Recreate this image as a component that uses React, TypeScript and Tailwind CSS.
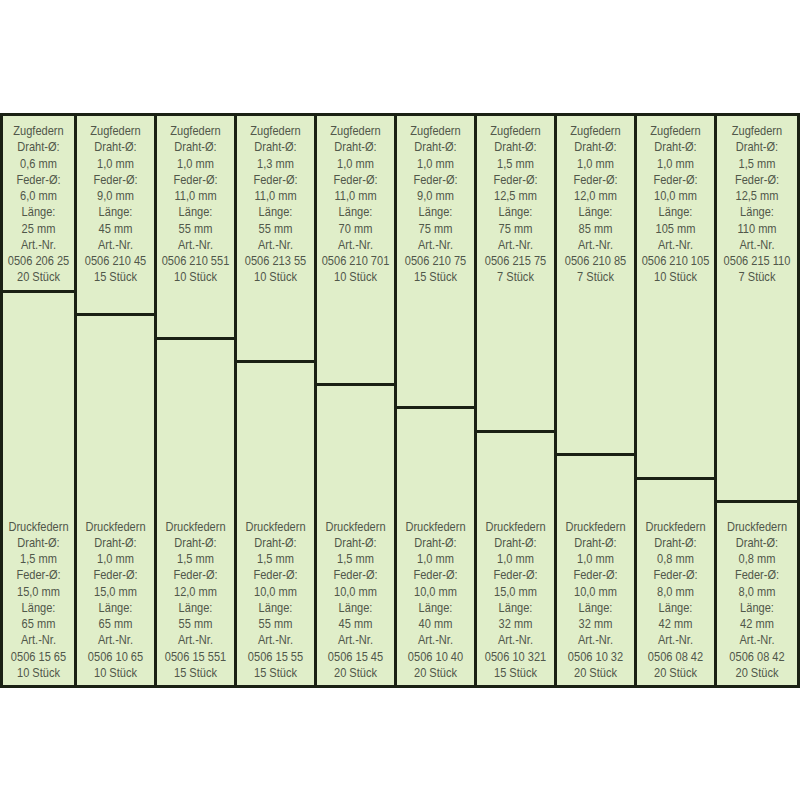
type Spring = { draht: string; feder: string; laenge: string; nr: string; stueck: string };

const zug: Spring[] = [
  { draht: '0,6', feder: '6,0', laenge: '25', nr: '0506 206 25', stueck: '20' },
  { draht: '1,0', feder: '9,0', laenge: '45', nr: '0506 210 45', stueck: '15' },
  { draht: '1,0', feder: '11,0', laenge: '55', nr: '0506 210 551', stueck: '10' },
  { draht: '1,3', feder: '11,0', laenge: '55', nr: '0506 213 55', stueck: '10' },
  { draht: '1,0', feder: '11,0', laenge: '70', nr: '0506 210 701', stueck: '10' },
  { draht: '1,0', feder: '9,0', laenge: '75', nr: '0506 210 75', stueck: '15' },
  { draht: '1,5', feder: '12,5', laenge: '75', nr: '0506 215 75', stueck: '7' },
  { draht: '1,0', feder: '12,0', laenge: '85', nr: '0506 210 85', stueck: '7' },
  { draht: '1,0', feder: '10,0', laenge: '105', nr: '0506 210 105', stueck: '10' },
  { draht: '1,5', feder: '12,5', laenge: '110', nr: '0506 215 110', stueck: '7' },
];

const druck: Spring[] = [
  { draht: '1,5', feder: '15,0', laenge: '65', nr: '0506 15 65', stueck: '10' },
  { draht: '1,0', feder: '15,0', laenge: '65', nr: '0506 10 65', stueck: '10' },
  { draht: '1,5', feder: '12,0', laenge: '55', nr: '0506 15 551', stueck: '15' },
  { draht: '1,5', feder: '10,0', laenge: '55', nr: '0506 15 55', stueck: '15' },
  { draht: '1,5', feder: '10,0', laenge: '45', nr: '0506 15 45', stueck: '20' },
  { draht: '1,0', feder: '10,0', laenge: '40', nr: '0506 10 40', stueck: '20' },
  { draht: '1,0', feder: '15,0', laenge: '32', nr: '0506 10 321', stueck: '15' },
  { draht: '1,0', feder: '10,0', laenge: '32', nr: '0506 10 32', stueck: '20' },
  { draht: '0,8', feder: '8,0', laenge: '42', nr: '0506 08 42', stueck: '20' },
  { draht: '0,8', feder: '8,0', laenge: '42', nr: '0506 08 42', stueck: '20' },
];

// Höhe des oberen Fachs je Spalte (Stufen von ~23px)
const topHeights = ['h-[177px]', 'h-[200px]', 'h-[224px]', 'h-[247px]', 'h-[270px]', 'h-[293px]', 'h-[317px]', 'h-[340px]', 'h-[364px]', 'h-[387px]'];
const colWidths = ['w-[71px]', 'w-[80px]', 'w-[80px]', 'w-[80px]', 'w-[80px]', 'w-[80px]', 'w-[80px]', 'w-[80px]', 'w-[80px]', 'w-[83px]'];

function Label({ title, s }: { title: string; s: Spring }) {
  // Schmalschrift nachgebildet: Arial-Metrik, horizontal gestaucht
  return (
    <div className="flex scale-x-[0.85] flex-col items-center whitespace-nowrap text-[13px] leading-[16.25px] text-[#50574a]">
      <span>{title}</span>
      <span>Draht-Ø:</span>
      <span>{s.draht} mm</span>
      <span>Feder-Ø:</span>
      <span>{s.feder} mm</span>
      <span>Länge:</span>
      <span>{s.laenge} mm</span>
      <span>Art.-Nr.</span>
      <span>{s.nr}</span>
      <span>{s.stueck} Stück</span>
    </div>
  );
}

export default function App() {
  return (
    <div className="h-[800px] w-[800px] bg-white pt-[113px] font-['Liberation_Sans',Arial,sans-serif]">
      <div className="flex h-[575px] border-[3px] border-[#1a2114] bg-[#e0eec9]">
        {zug.map((z, i) => (
          <div key={i} className={`flex flex-col ${colWidths[i]} ${i > 0 ? 'border-l-[3px] border-[#1a2114]' : ''}`}>
            <div className={`${topHeights[i]} shrink-0 border-b-[3px] border-[#1a2114] pt-[7px]`}>
              <Label title="Zugfedern" s={z} />
            </div>
            <div className="flex flex-1 flex-col justify-end pb-[4px]">
              <Label title="Druckfedern" s={druck[i]} />
            </div>
          </div>
        ))}
      </div>
    </div>
  );
}
